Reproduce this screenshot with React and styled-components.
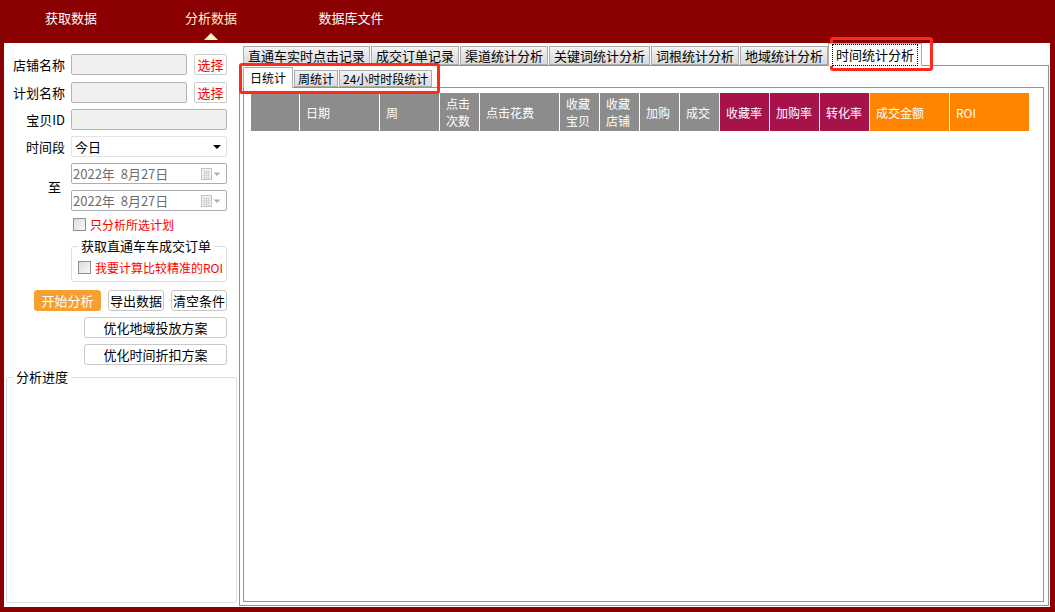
import React from "react";
import styled, { createGlobalStyle } from "styled-components";

const GlobalStyle = createGlobalStyle`
  html, body { margin: 0; padding: 0; }
  body {
    font-family: "Noto Sans CJK SC", "Noto Sans", sans-serif;
    font-size: 13px;
    color: #000;
  }
  * { box-sizing: border-box; }
`;

const Page = styled.div`
  position: relative;
  width: 1055px;
  height: 612px;
  background: #8b0000;
  display: flex;
  flex-direction: column;
  overflow: hidden;
`;

const TopNav = styled.nav`
  height: 43px;
  flex-shrink: 0;
  display: flex;
  padding-left: 1px;
`;

const NavItem = styled.div`
  width: 140px;
  display: flex;
  flex-direction: column;
  align-items: center;
  padding-top: 10px;
  font-size: 13px;
  line-height: 16px;
  color: ${(p) => (p.$active ? "#fff4c4" : "#ffffff")};
  &::after {
    content: "";
    display: ${(p) => (p.$active ? "block" : "none")};
    margin-top: 7px;
    border-left: 7px solid transparent;
    border-right: 7px solid transparent;
    border-bottom: 7px solid #fff4c4;
  }
`;

const Main = styled.div`
  flex: 1;
  min-height: 0;
  margin: 0 5px 5px 4px;
  background: #fff;
  display: flex;
`;

/* ---------- left side ---------- */

const LeftPanel = styled.aside`
  width: 235px;
  flex-shrink: 0;
  display: flex;
  flex-direction: column;
  padding-top: 11px;
`;

const FormGrid = styled.div`
  display: grid;
  grid-template-columns: 67px 156px;
  row-gap: 6px;
  align-items: center;
`;

const Label = styled.div`
  justify-self: end;
  padding-right: ${(p) => (p.$pad ? p.$pad : 6)}px;
  line-height: 16px;
  white-space: nowrap;
  ${(p) => p.$span && `grid-row: span ${p.$span};`}
`;

const InputRow = styled.div`
  display: flex;
  gap: 7px;
  ${(p) => p.$extra && `margin-bottom: ${p.$extra}px;`}
`;

const TextBox = styled.div`
  height: 21px;
  flex: 1;
  border: 1px solid #b3b3b3;
  border-radius: 2px;
  background: #f0f0f0;
`;

const PickButton = styled.button`
  width: 33px;
  height: 21px;
  padding: 0;
  border: 1px solid #cdcdcd;
  border-radius: 2px;
  background: #fff;
  color: #ff0000;
  font: inherit;
  font-size: 13px;
  line-height: 19px;
`;

const SelectBox = styled.div`
  height: 21px;
  border: 1px solid #e2e2e2;
  border-radius: 2px;
  background: #fff;
  display: flex;
  align-items: center;
  justify-content: space-between;
  padding: 0 5px 0 3px;
  line-height: 19px;
  &::after {
    content: "";
    border-left: 4px solid transparent;
    border-right: 4px solid transparent;
    border-top: 4px solid #000;
  }
`;

const DateBox = styled.div`
  height: 21px;
  border: 1px solid #adadad;
  border-radius: 2px;
  background: #fff;
  display: flex;
  align-items: center;
  justify-content: space-between;
  padding: 0 5px 0 1px;
  color: #6d6d6d;
  white-space: pre;
  line-height: 19px;
`;

const CheckLine = styled.label`
  display: flex;
  align-items: center;
  gap: 4px;
  height: 15px;
  padding-left: ${(p) => (p.$indent ? p.$indent : 0)}px;
  color: #ff0000;
  font-size: 12px;
  line-height: 15px;
  white-space: nowrap;
  ${(p) => p.$col && "grid-column: 2;"}
`;

const Check = styled.span`
  width: 13px;
  height: 13px;
  flex-shrink: 0;
  border: 1px solid #8f8f8f;
  background: linear-gradient(135deg, #dcdcdc, #f9f9f9);
`;

const GroupBox = styled.fieldset`
  margin: ${(p) => p.$margin || "0"};
  padding: 7px 2px 6px 6px;
  border: 1px solid #d5dfe5;
  border-radius: 3px;
  min-width: 0;
  ${(p) => p.$col && "grid-column: 2;"}
  ${(p) => p.$grow && "flex: 1;"}
  legend {
    padding: 0 3px;
    margin-left: ${(p) => p.$legendOffset || 0}px;
    font-size: 13px;
    line-height: 14px;
  }
`;

const ButtonRow = styled.div`
  grid-column: 1 / -1;
  display: flex;
  justify-content: flex-end;
  gap: 7px;
  ${(p) => p.$top && `margin-top: ${p.$top}px;`}
`;

const Button = styled.button`
  width: ${(p) => p.$w}px;
  height: 21px;
  padding: 0;
  border: 1px solid ${(p) => (p.$primary ? "#f5a030" : "#c8c8c8")};
  border-radius: 3px;
  background: ${(p) => (p.$primary ? "#f5a030" : "#fff")};
  color: ${(p) => (p.$primary ? "#fff" : "#000")};
  font: inherit;
  font-size: 13px;
  line-height: 19px;
`;

/* ---------- right side ---------- */

const RightPanel = styled.section`
  flex: 1;
  min-width: 0;
  display: flex;
  flex-direction: column;
  margin: 0 1px 1px 0;
`;

const TabStrip = styled.div`
  display: flex;
  align-items: flex-end;
  height: ${(p) => p.$h}px;
  padding-left: ${(p) => p.$pl || 0}px;
  flex-shrink: 0;
`;

const Tab = styled.div`
  position: relative;
  height: ${(p) => (p.$active ? p.$activeH : p.$h)}px;
  margin-right: ${(p) => (p.$active ? p.$gapAfter || 0 : 1)}px;
  ${(p) => p.$active && "margin-bottom: -1px; z-index: 1;"}
  ${(p) => p.$active && p.$overlap && "margin-left: -1px;"}
  padding: 0 ${(p) => (p.$active ? p.$activePx : p.$px)}px;
  border: 1px solid #acacac;
  border-bottom: ${(p) => (p.$active ? "none" : "1px solid #acacac")};
  background: ${(p) =>
    p.$active
      ? "#fff"
      : "linear-gradient(#f4f4f4 0%, #e6e6e6 50%, #dadada 100%)"};
  display: flex;
  align-items: center;
  font-size: ${(p) => p.$fs}px;
  line-height: 16px;
  white-space: nowrap;
`;

const FocusText = styled.span`
  outline: 1px dotted #000;
  outline-offset: 1px;
  padding: 1px 2px;
`;

const Pane = styled.div`
  flex: 1;
  min-height: 0;
  display: flex;
  flex-direction: column;
  border: 1px solid #929399;
  background: #fff;
  padding: ${(p) => p.$pad};
`;

const HeaderGrid = styled.div`
  display: grid;
  grid-template-columns: 48px 79px 59px 39px 79px 39px 39px 39px 39px 49px 49px 49px 79px 79px;
  column-gap: 1px;
  height: 38px;
  background: #fff;
`;

const Cell = styled.div`
  display: flex;
  align-items: center;
  padding-left: 6px;
  background: ${(p) =>
    p.$tone === "rate" ? "#a8124b" : p.$tone === "money" ? "#ff8500" : "#8c8c8c"};
  color: #fff;
  font-size: 12px;
  line-height: 17px;
`;

const Highlight = styled.div`
  position: absolute;
  left: ${(p) => p.$x}px;
  top: ${(p) => p.$y}px;
  width: ${(p) => p.$w}px;
  height: ${(p) => p.$h}px;
  border: 3px solid #ff2a1a;
  border-radius: 3px;
  pointer-events: none;
`;

function CalendarIcon() {
  return (
    <svg width="20" height="12" viewBox="0 0 20 12">
      <rect x="0.5" y="0.5" width="10" height="11" fill="#f4f4f4" stroke="#c4c4c4" />
      <path d="M2 3.5h7M2 5.5h7M2 7.5h7M2 9.5h7M3.5 2v9M5.5 2v9M7.5 2v9" stroke="#d6d6d6" strokeWidth="1" />
      <path d="M12.5 4.5h7l-3.5 3.5z" fill="#b0b0b0" />
    </svg>
  );
}

const outerTabs = [
  "直通车实时点击记录",
  "成交订单记录",
  "渠道统计分析",
  "关键词统计分析",
  "词根统计分析",
  "地域统计分析",
];

const innerTabs = ["日统计", "周统计", "24小时时段统计"];

const columns = [
  ["", "base"],
  ["日期", "base"],
  ["周", "base"],
  ["点击次数", "base"],
  ["点击花费", "base"],
  ["收藏宝贝", "base"],
  ["收藏店铺", "base"],
  ["加购", "base"],
  ["成交", "base"],
  ["收藏率", "rate"],
  ["加购率", "rate"],
  ["转化率", "rate"],
  ["成交金额", "money"],
  ["ROI", "money"],
];

export default function App() {
  return (
    <>
      <GlobalStyle />
      <Page>
        <TopNav>
          <NavItem>获取数据</NavItem>
          <NavItem $active>分析数据</NavItem>
          <NavItem>数据库文件</NavItem>
        </TopNav>

        <Main>
          <LeftPanel>
            <FormGrid>
              <Label>店铺名称</Label>
              <InputRow $extra={1}>
                <TextBox />
                <PickButton>选择</PickButton>
              </InputRow>

              <Label>计划名称</Label>
              <InputRow>
                <TextBox />
                <PickButton>选择</PickButton>
              </InputRow>

              <Label>宝贝ID</Label>
              <TextBox />

              <Label>时间段</Label>
              <SelectBox>今日</SelectBox>

              <Label $span={2} $pad={10}>至</Label>
              <DateBox>
                2022年  8月27日
                <CalendarIcon />
              </DateBox>
              <DateBox>
                2022年  8月27日
                <CalendarIcon />
              </DateBox>

              <CheckLine $col $indent={2}>
                <Check />
                只分析所选计划
              </CheckLine>

              <GroupBox $col $margin="1px 0 0 0" $legendOffset={0}>
                <legend>获取直通车车成交订单</legend>
                <CheckLine>
                  <Check />
                  我要计算比较精准的ROI
                </CheckLine>
              </GroupBox>

              <ButtonRow $top={2}>
                <Button $w={67} $primary>开始分析</Button>
                <Button $w={56}>导出数据</Button>
                <Button $w={56}>清空条件</Button>
              </ButtonRow>
              <ButtonRow>
                <Button $w={143}>优化地域投放方案</Button>
              </ButtonRow>
              <ButtonRow>
                <Button $w={143}>优化时间折扣方案</Button>
              </ButtonRow>
            </FormGrid>

            <GroupBox $grow $margin="5px 2px 4px 2px" $legendOffset={0}>
              <legend>分析进度</legend>
            </GroupBox>
          </LeftPanel>

          <RightPanel>
            <TabStrip $h={22} $pl={4}>
              {outerTabs.map((t) => (
                <Tab key={t} $h={19} $px={4} $fs={13}>
                  {t}
                </Tab>
              ))}
              <Tab $active $overlap $activeH={23} $activePx={5} $fs={13}>
                <FocusText>时间统计分析</FocusText>
              </Tab>
            </TabStrip>

            <Pane $pad="0 4px 3px 3px">
              <TabStrip $h={21}>
                {innerTabs.map((t, i) => (
                  <Tab
                    key={t}
                    $active={i === 0}
                    $activeH={21}
                    $h={17}
                    $px={3}
                    $activePx={6}
                    $gapAfter={1}
                    $fs={12}
                  >
                    {t}
                  </Tab>
                ))}
              </TabStrip>
              <Pane $pad="5px 0 0 7px">
                <HeaderGrid>
                  {columns.map(([name, tone], i) => (
                    <Cell key={i} $tone={tone}>
                      {name}
                    </Cell>
                  ))}
                </HeaderGrid>
              </Pane>
            </Pane>
          </RightPanel>
        </Main>

        <Highlight $x={830} $y={37} $w={103} $h={34} />
        <Highlight $x={239} $y={63} $w={201} $h={31} />
      </Page>
    </>
  );
}
